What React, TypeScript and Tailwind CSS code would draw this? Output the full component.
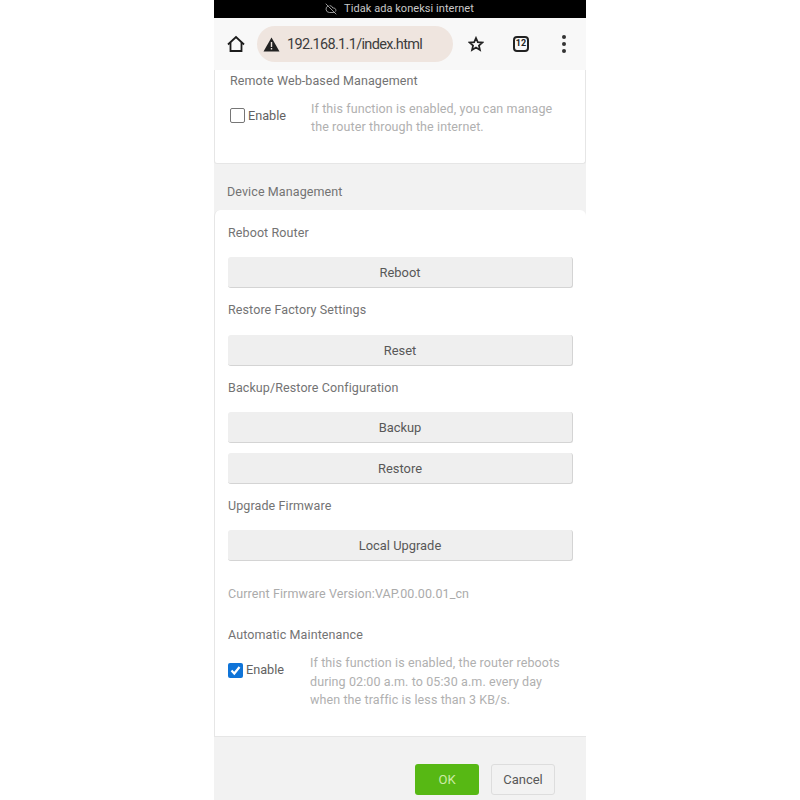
import React from 'react';
import { CloudOff } from 'lucide-react';

function ActionButton({ label }: { label: string }) {
  return (
    <button className="w-full h-[31px] pt-px rounded-[3px] bg-[#efefef] border-r border-b border-[#d4d4d4] text-[12.9px] text-[#585858]">
      {label}
    </button>
  );
}

function SectionLabel({ children, className }: { children: React.ReactNode; className: string }) {
  return <div className={`text-[12.5px] leading-[16px] tracking-[0.1px] text-[#737373] ${className}`}>{children}</div>;
}

export default function App() {
  return (
    <div className="min-h-[800px] bg-white flex justify-center font-['Roboto',sans-serif]">
      <div className="w-[372px] h-[800px] overflow-hidden bg-[#f2f2f2] flex flex-col">
        {/* Status bar */}
        <div className="h-[18px] bg-black flex items-center justify-center gap-[7px] pr-[1px] text-[11px] tracking-[0.05px] text-[#c8c8c8]">
          <CloudOff size={12} strokeWidth={1.5} />
          <span>Tidak ada koneksi internet</span>
        </div>

        {/* Browser toolbar */}
        <div className="h-[52px] bg-[#f8f8f8] flex items-center pl-[13px]">
          <svg width="18" height="18" viewBox="0 0 18 18" fill="none" stroke="#1c1c1c" strokeWidth="1.8" strokeLinejoin="miter">
            <path d="M1 9.5 9 2l8 7.5" />
            <path d="M3.5 7.5V16h11V7.5" />
          </svg>
          <div className="ml-[12px] w-[196px] h-[36px] rounded-full bg-[#efe5df] flex items-center pl-[6px]">
            <svg width="17" height="15" viewBox="0 0 17 15">
              <path d="M8.5 0.5 16.5 14.5H0.5Z" fill="#222222" />
              <rect x="7.8" y="5" width="1.4" height="5" fill="#efe5df" />
              <rect x="7.8" y="11" width="1.4" height="1.5" fill="#efe5df" />
            </svg>
            <span className="ml-[7px] pt-px text-[14.5px] tracking-[-0.68px] text-[#3c3c3c]">192.168.1.1/index.html</span>
          </div>
          <svg className="ml-[15px]" width="16" height="16" viewBox="0 0 24 24" fill="none" stroke="#222222" strokeWidth="2.6" strokeLinejoin="miter">
            <path d="M12 3l2.7 6.2 6.8.6-5.1 4.5 1.5 6.6L12 17.4l-5.9 3.5 1.5-6.6-5.1-4.5 6.8-.6z" />
          </svg>
          <div className="ml-[29px] w-[16px] h-[16px] rounded-[4px] border-2 border-[#222222] flex items-center justify-center text-[9px] font-bold text-[#222222]">
            12
          </div>
          <div className="ml-[33px] flex flex-col gap-[3px]">
            <div className="w-[4px] h-[4px] rounded-full bg-[#333333]" />
            <div className="w-[4px] h-[4px] rounded-full bg-[#333333]" />
            <div className="w-[4px] h-[4px] rounded-full bg-[#333333]" />
          </div>
        </div>

        {/* Remote management card */}
        <div className="h-[94px] bg-white rounded-b-[3px] border-x border-b border-[#e6e6e6] pl-[15px] pt-[3px]">
          <SectionLabel className="">Remote Web-based Management</SectionLabel>
          <div className="flex mt-[11px]">
            <div className="flex items-center w-[81px] h-[31px] self-start">
              <div className="w-[15px] h-[15px] rounded-[2px] border border-[#767676] bg-white" />
              <span className="ml-[3px] text-[12.7px] text-[#626262]">Enable</span>
            </div>
            <p className="w-[262px] text-[12.5px] leading-[18px] tracking-[0.1px] text-[#b0b0b0]">
              If this function is enabled, you can manage the router through the internet.
            </p>
          </div>
        </div>

        <div className="h-[46px] flex items-center pl-[13px] pt-[10px] text-[12.5px] tracking-[0.1px] text-[#737373]">
          Device Management
        </div>

        {/* Device management card */}
        <div className="h-[527px] bg-white rounded-t-[6px] border-l border-b border-[#e6e6e6] pl-[13px] pr-[13px] pt-[15px]">
          <SectionLabel className="">Reboot Router</SectionLabel>
          <div className="mt-[16px]"><ActionButton label="Reboot" /></div>
          <SectionLabel className="mt-[14px]">Restore Factory Settings</SectionLabel>
          <div className="mt-[17px]"><ActionButton label="Reset" /></div>
          <SectionLabel className="mt-[14px]">Backup/Restore Configuration</SectionLabel>
          <div className="mt-[16px]"><ActionButton label="Backup" /></div>
          <div className="mt-[10px]"><ActionButton label="Restore" /></div>
          <SectionLabel className="mt-[14px]">Upgrade Firmware</SectionLabel>
          <div className="mt-[16px]"><ActionButton label="Local Upgrade" /></div>
          <div className="mt-[25px] text-[12.5px] leading-[16px] tracking-[0.1px] text-[#ababab]">
            Current Firmware Version:VAP.00.00.01_cn
          </div>
          <SectionLabel className="mt-[25px]">Automatic Maintenance</SectionLabel>
          <div className="flex mt-[11px]">
            <div className="flex items-center w-[82px] h-[32px] self-start">
              <div className="w-[15px] h-[15px] rounded-[2px] bg-[#0f74d8] flex items-center justify-center">
                <svg width="13" height="13" viewBox="0 0 13 13" fill="none" stroke="#ffffff" strokeWidth="2.2">
                  <path d="M2.5 6.5 5.3 9.5 10.5 3" />
                </svg>
              </div>
              <span className="ml-[3px] text-[12.7px] text-[#626262]">Enable</span>
            </div>
            <p className="w-[262px] text-[12.5px] leading-[18.5px] tracking-[0.1px] text-[#b0b0b0]">
              If this function is enabled, the router reboots during 02:00 a.m. to 05:30 a.m. every day when the traffic is less than 3 KB/s.
            </p>
          </div>
        </div>

        {/* Footer actions */}
        <div className="flex justify-end pr-[31px] pt-[27px]">
          <button className="w-[64px] h-[31px] rounded-[3px] bg-[#57b814] text-[13px] text-[#cdeba6]">OK</button>
          <button className="ml-[12px] w-[64px] h-[31px] rounded-[3px] bg-[#f2f2f2] border border-[#dddddd] text-[13px] text-[#585858]">Cancel</button>
        </div>
      </div>
    </div>
  );
}
